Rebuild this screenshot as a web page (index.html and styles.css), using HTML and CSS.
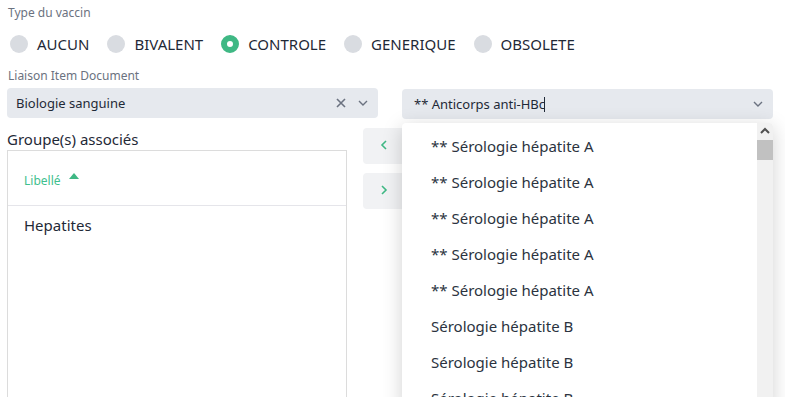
FILE: index.html
```html
<!DOCTYPE html>
<html lang="fr">
<head>
    <meta charset="UTF-8">
    <title>Type du vaccin</title>
    <link rel="stylesheet" href="styles.css">
</head>
<body>

<div class="form">
    <div class="label">Type du vaccin</div>
    <div class="radios">
        <label class="radio"><span class="dot"></span>AUCUN</label>
        <label class="radio"><span class="dot"></span>BIVALENT</label>
        <label class="radio"><span class="dot checked"></span>CONTROLE</label>
        <label class="radio"><span class="dot"></span>GENERIQUE</label>
        <label class="radio"><span class="dot"></span>OBSOLETE</label>
    </div>

    <div class="label">Liaison Item Document</div>
    <div class="selects">
        <div class="select">
            <span class="select-text">Biologie sanguine</span>
            <svg class="clear" viewBox="0 0 10 10" width="10" height="10"><path d="M1 1l8 8M9 1l-8 8" fill="none" stroke="#6b7280" stroke-width="1.6"/></svg>
            <svg class="chevron" viewBox="0 0 12 12" width="12" height="12"><path d="M2 4l4 4 4-4" fill="none" stroke="#6b7280" stroke-width="1.4"/></svg>
        </div>
        <div class="select select-open">
            <span class="select-text">** Anticorps anti-HBc<span class="caret"></span></span>
            <svg class="chevron" viewBox="0 0 12 12" width="12" height="12"><path d="M2 4l4 4 4-4" fill="none" stroke="#6b7280" stroke-width="1.4"/></svg>

            <div class="dropdown">
                <ul class="options">
                    <li>** Sérologie hépatite A</li>
                    <li>** Sérologie hépatite A</li>
                    <li>** Sérologie hépatite A</li>
                    <li>** Sérologie hépatite A</li>
                    <li>** Sérologie hépatite A</li>
                    <li>Sérologie hépatite B</li>
                    <li>Sérologie hépatite B</li>
                    <li>Sérologie hépatite B</li>
                </ul>
                <div class="scrollbar">
                    <svg class="arrow" viewBox="0 0 10 8" width="10" height="8"><path d="M1 6l4-4 4 4" fill="none" stroke="#505050" stroke-width="2"/></svg>
                    <div class="thumb"></div>
                </div>
            </div>
        </div>
    </div>

    <div class="picklist">
        <div class="panel">
            <div class="panel-title">Groupe(s) associés</div>
            <div class="table">
                <div class="thead">Libellé <span class="sort"></span></div>
                <div class="row">Hepatites</div>
            </div>
        </div>
        <div class="buttons">
            <button class="move"><svg viewBox="0 0 10 12" width="10" height="12"><path d="M7 2L3 6l4 4" fill="none" stroke="#3fb884" stroke-width="1.6"/></svg></button>
            <button class="move"><svg viewBox="0 0 10 12" width="10" height="12"><path d="M3 2l4 4-4 4" fill="none" stroke="#3fb884" stroke-width="1.6"/></svg></button>
        </div>
    </div>
</div>

</body>
</html>
```

FILE: styles.css
```css
body {
    font-family: 'Noto Sans', 'Open Sans', sans-serif;
    color: #1f2937;
    background: #ffffff;
    margin: 0;
    padding: 0;
    overflow: hidden;
}

.form {
    padding: 4px 7px 0 8px;
}

.label {
    font-size: 12px;
    color: #6b7280;
    line-height: 18px;
}

.radios {
    display: flex;
    align-items: center;
    height: 26px;
    margin: 9px 0 10px 2px;
}

.radio {
    display: flex;
    align-items: center;
    font-size: 15px;
    margin-right: 18px;
}

.dot {
    width: 18px;
    height: 18px;
    border-radius: 50%;
    background: #d9dce1;
    margin-right: 9px;
    box-sizing: border-box;
}

.dot.checked {
    background: #fff;
    border: 6px solid #3fb884;
}

.selects {
    display: flex;
    gap: 24px;
    margin-top: 3px;
    margin-left: -1px;
}

.select {
    position: relative;
    width: 371px;
    height: 30px;
    background: #e6e9ee;
    border-radius: 4px;
    display: flex;
    align-items: center;
    padding: 0 9px;
    box-sizing: border-box;
    font-size: 13px;
}

.select-open {
    margin-top: 1px;
    padding-left: 12px;
}

.select-text {
    flex: 1;
}

.caret {
    display: inline-block;
    width: 1px;
    height: 15px;
    background: #1f2937;
    vertical-align: -3px;
    margin-left: -1px;
}

.clear {
    margin-right: 11px;
}

.dropdown {
    position: absolute;
    top: 34px;
    left: 0;
    width: 371px;
    height: 290px;
    background: #fff;
    border-radius: 4px;
    box-shadow: 0 4px 20px rgba(0, 0, 0, 0.18);
    display: flex;
    overflow: hidden;
    z-index: 5;
}

.options {
    list-style: none;
    margin: 0;
    padding: 5px 0 0 29px;
    flex: 1;
}

.options li {
    height: 36px;
    line-height: 36px;
    font-size: 15px;
    color: #2b3340;
}

.scrollbar {
    width: 16px;
    background: #f1f1f1;
    display: flex;
    flex-direction: column;
    align-items: center;
}

.arrow {
    margin-top: 4px;
}

.thumb {
    width: 16px;
    height: 20px;
    background: #c1c1c1;
    margin-top: 5px;
}

.picklist {
    display: flex;
    gap: 16px;
    margin-top: 9px;
    margin-left: -1px;
}

.panel {
    width: 340px;
}

.panel-title {
    font-size: 15px;
    line-height: 22px;
}

.table {
    border: 1px solid #dcdcdc;
    height: 260px;
}

.thead {
    height: 55px;
    display: flex;
    align-items: center;
    padding: 4px 16px 0;
    box-sizing: border-box;
    color: #3fc08e;
    font-size: 12px;
    border-bottom: 1px solid #e5e5ea;
}

.sort {
    width: 0;
    height: 0;
    border-left: 5px solid transparent;
    border-right: 5px solid transparent;
    border-bottom: 6px solid #3fb884;
    margin-left: 8px;
    margin-top: -8px;
}

.row {
    padding: 9px 16px;
    font-size: 15px;
}

.buttons {
    display: flex;
    flex-direction: column;
    gap: 9px;
}

.move {
    width: 48px;
    height: 36px;
    border: none;
    border-radius: 4px;
    background: #f1f2f4;
    padding: 0 0 0 16px;
    text-align: left;
}
```
